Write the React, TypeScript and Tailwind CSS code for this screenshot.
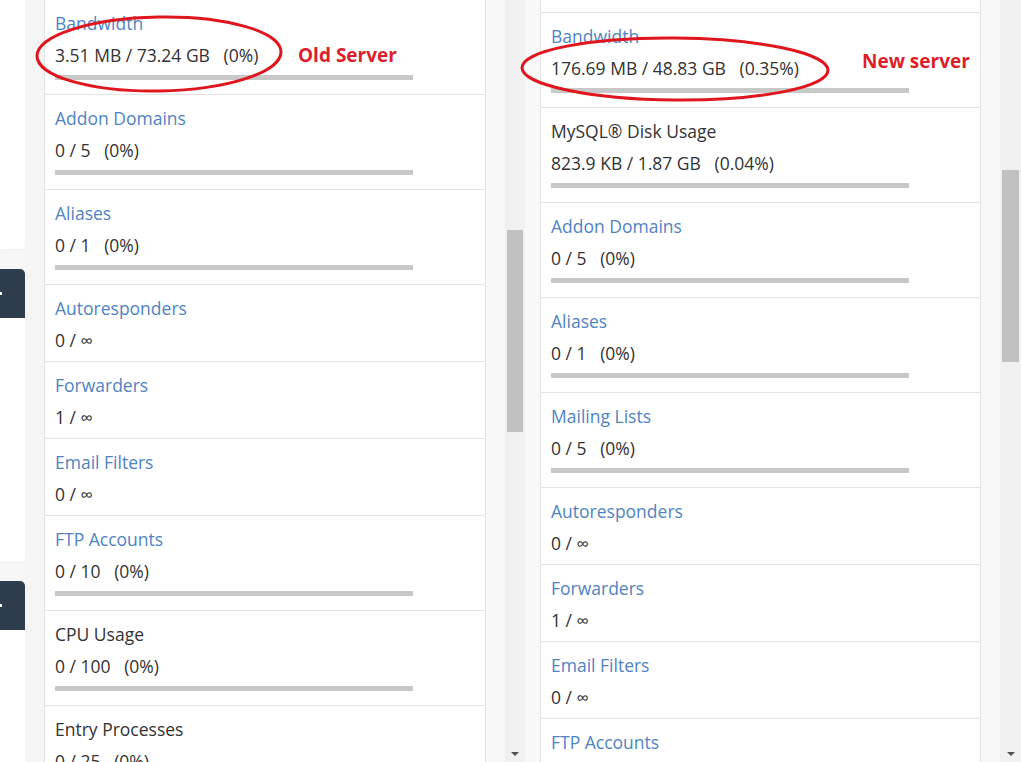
import React from "react";

type Row = { label: string; link: boolean; value: string; pct?: string; bar: boolean };

const leftRows: Row[] = [
  { label: "Bandwidth", link: true, value: "3.51 MB / 73.24 GB", pct: "(0%)", bar: true },
  { label: "Addon Domains", link: true, value: "0 / 5", pct: "(0%)", bar: true },
  { label: "Aliases", link: true, value: "0 / 1", pct: "(0%)", bar: true },
  { label: "Autoresponders", link: true, value: "0 / ∞", bar: false },
  { label: "Forwarders", link: true, value: "1 / ∞", bar: false },
  { label: "Email Filters", link: true, value: "0 / ∞", bar: false },
  { label: "FTP Accounts", link: true, value: "0 / 10", pct: "(0%)", bar: true },
  { label: "CPU Usage", link: false, value: "0 / 100", pct: "(0%)", bar: true },
  { label: "Entry Processes", link: false, value: "0 / 25", pct: "(0%)", bar: true },
];

const rightRows: Row[] = [
  { label: "Bandwidth", link: true, value: "176.69 MB / 48.83 GB", pct: "(0.35%)", bar: true },
  { label: "MySQL® Disk Usage", link: false, value: "823.9 KB / 1.87 GB", pct: "(0.04%)", bar: true },
  { label: "Addon Domains", link: true, value: "0 / 5", pct: "(0%)", bar: true },
  { label: "Aliases", link: true, value: "0 / 1", pct: "(0%)", bar: true },
  { label: "Mailing Lists", link: true, value: "0 / 5", pct: "(0%)", bar: true },
  { label: "Autoresponders", link: true, value: "0 / ∞", bar: false },
  { label: "Forwarders", link: true, value: "1 / ∞", bar: false },
  { label: "Email Filters", link: true, value: "0 / ∞", bar: false },
  { label: "FTP Accounts", link: true, value: "0 / 10", pct: "(0%)", bar: true },
];

function StatRow({ r }: { r: Row }) {
  return (
    <div className={`shrink-0 border-b border-[#e3e3e3] pl-[10px] pt-[7px] ${r.bar ? "h-[95px]" : "h-[77px]"}`}>
      <div className={`h-[32px] leading-[32px] text-[17.5px] ${r.link ? "text-[#4f83c2]" : "text-[#333333]"}`}>{r.label}</div>
      <div className="h-[32px] leading-[32px] text-[17.5px] text-[#333333] whitespace-pre">
        {r.value}
        {r.pct ? `   ${r.pct}` : ""}
      </div>
      {r.bar && <div className="mt-[4px] h-[5px] w-[358px] bg-[#c8c8c8]" />}
    </div>
  );
}

function Scrollbar({ thumbTop, thumbH, w }: { thumbTop: number; thumbH: number; w: string }) {
  return (
    <div className={`relative h-full ${w} shrink-0 bg-[#f0f0f0]`}>
      <div
        className="absolute left-[2px] right-[2px] bg-[#c1c1c1]"
        style={{ top: thumbTop, height: thumbH }}
      />
      <div className="absolute bottom-[6px] left-1/2 -translate-x-1/2 w-0 h-0 border-l-[4px] border-r-[4px] border-t-[4px] border-l-transparent border-r-transparent border-t-[#505050]" />
    </div>
  );
}

export default function App() {
  return (
    <div
      className="relative w-[1021px] h-[762px] overflow-hidden flex bg-[#f7f7f7]"
      style={{ fontFamily: '"Open Sans", "Noto Sans", sans-serif' }}
    >
      {/* left strip */}
      <div className="w-[25px] shrink-0 flex flex-col gap-[20px]">
        <div className="h-[249px] shrink-0 bg-white rounded-br-[4px] shadow-[0_0_2px_rgba(0,0,0,0.08)]" />
        <div className="shrink-0 flex flex-col">
          <div className="relative h-[49px] bg-[#2e3d4d] rounded-tr-[5px]">
            <div className="absolute left-0 top-[23px] w-[2px] h-[3px] bg-white" />
          </div>
          <div className="h-[243px] bg-white rounded-br-[4px]" />
        </div>
        <div className="shrink-0 flex flex-col">
          <div className="relative h-[49px] bg-[#2e3d4d] rounded-tr-[5px]">
            <div className="absolute left-0 top-[23px] w-[2px] h-[3px] bg-white" />
          </div>
          <div className="h-[200px] bg-white" />
        </div>
      </div>

      <div className="w-[19px] shrink-0 bg-[#f5f5f5]" />

      {/* left panel */}
      <div className="w-[442px] shrink-0 h-full bg-white border-x border-[#e3e3e3] flex flex-col">
        <div className="border-t border-[#e3e3e3] -mt-px" />
        {leftRows.map((r) => (
          <StatRow key={r.label} r={r} />
        ))}
      </div>

      <div className="w-[19px] shrink-0 bg-[#f8f8f8]" />
      <Scrollbar thumbTop={230} thumbH={202} w="w-[20px]" />
      <div className="w-[15px] shrink-0 bg-[#f8f8f8]" />

      {/* right panel */}
      <div className="w-[441px] shrink-0 h-full bg-white border-x border-[#e3e3e3] flex flex-col">
        <div className="h-[13px] shrink-0 border-b border-[#e3e3e3]" />
        {rightRows.map((r) => (
          <StatRow key={r.label} r={r} />
        ))}
      </div>

      <div className="w-[19px] shrink-0 bg-[#f8f8f8]" />
      <Scrollbar thumbTop={170} thumbH={192} w="w-[21px]" />

      {/* annotations */}
      <svg className="absolute left-0 top-0 pointer-events-none" width="1021" height="762">
        <ellipse cx="159" cy="54" rx="122" ry="37" fill="none" stroke="#e0161e" strokeWidth="3" transform="rotate(-1 159 54)" />
        <ellipse cx="675" cy="69" rx="153" ry="31" fill="none" stroke="#e0161e" strokeWidth="3" transform="rotate(0.5 675 69)" />
      </svg>
      <div className="absolute left-[298px] top-[42px] text-[19px] leading-[26px] font-bold text-[#dc1f2b]">Old Server</div>
      <div className="absolute left-[862px] top-[48px] text-[19px] leading-[26px] font-bold text-[#dc1f2b]">New server</div>
    </div>
  );
}
